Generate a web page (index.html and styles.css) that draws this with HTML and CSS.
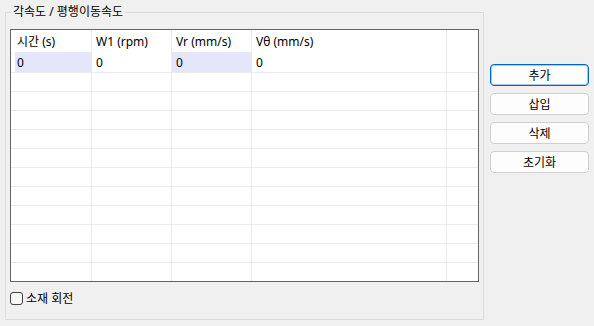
FILE: index.html
```html
<!DOCTYPE html>
<html lang="ko">
<head>
    <meta charset="UTF-8">
    <meta name="viewport" content="width=device-width, initial-scale=1.0">
    <title>각속도 / 평행이동속도</title>
    <link rel="stylesheet" href="styles.css">
</head>
<body>
    <div class="window">
        <fieldset class="group">
            <legend class="group-title">각속도 / 평행이동속도</legend>

            <div class="grid">
                <div class="row head">
                    <div class="cell c1">시간 (s)</div>
                    <div class="cell c2">W1 (rpm)</div>
                    <div class="cell c3">Vr (mm/s)</div>
                    <div class="cell c4">Vθ (mm/s)</div>
                    <div class="cell fill"></div>
                </div>
                <div class="row first">
                    <div class="cell c1 sel">0</div>
                    <div class="cell c2">0</div>
                    <div class="cell c3 sel">0</div>
                    <div class="cell c4">0</div>
                    <div class="cell fill"></div>
                </div>
                <div class="row"><div class="cell c1"></div><div class="cell c2"></div><div class="cell c3"></div><div class="cell c4"></div><div class="cell fill"></div></div>
                <div class="row"><div class="cell c1"></div><div class="cell c2"></div><div class="cell c3"></div><div class="cell c4"></div><div class="cell fill"></div></div>
                <div class="row"><div class="cell c1"></div><div class="cell c2"></div><div class="cell c3"></div><div class="cell c4"></div><div class="cell fill"></div></div>
                <div class="row"><div class="cell c1"></div><div class="cell c2"></div><div class="cell c3"></div><div class="cell c4"></div><div class="cell fill"></div></div>
                <div class="row"><div class="cell c1"></div><div class="cell c2"></div><div class="cell c3"></div><div class="cell c4"></div><div class="cell fill"></div></div>
                <div class="row"><div class="cell c1"></div><div class="cell c2"></div><div class="cell c3"></div><div class="cell c4"></div><div class="cell fill"></div></div>
                <div class="row"><div class="cell c1"></div><div class="cell c2"></div><div class="cell c3"></div><div class="cell c4"></div><div class="cell fill"></div></div>
                <div class="row"><div class="cell c1"></div><div class="cell c2"></div><div class="cell c3"></div><div class="cell c4"></div><div class="cell fill"></div></div>
                <div class="row"><div class="cell c1"></div><div class="cell c2"></div><div class="cell c3"></div><div class="cell c4"></div><div class="cell fill"></div></div>
                <div class="row"><div class="cell c1"></div><div class="cell c2"></div><div class="cell c3"></div><div class="cell c4"></div><div class="cell fill"></div></div>
                <div class="row last"><div class="cell c1"></div><div class="cell c2"></div><div class="cell c3"></div><div class="cell c4"></div><div class="cell fill"></div></div>
            </div>

            <label class="check">
                <span class="box"></span>
                <span class="check-text">소재 회전</span>
            </label>
        </fieldset>

        <div class="actions">
            <button class="btn default">추가</button>
            <button class="btn">삽입</button>
            <button class="btn">삭제</button>
            <button class="btn">초기화</button>
        </div>
    </div>
</body>
</html>
```

FILE: styles.css
```css
* {
    margin: 0;
    padding: 0;
    box-sizing: border-box;
}

body {
    font-family: "Noto Sans", "Noto Sans CJK KR", sans-serif;
    font-size: 12px;
    color: #000;
    background-color: #f0f0f0;
    width: 594px;
    height: 326px;
    overflow: hidden;
}

.window {
    display: flex;
    align-items: flex-start;
    padding: 4px 0 0 5px;
}

/* group box */
.group {
    width: 479px;
    border: 1px solid #dcdcdc;
    padding: 0 4px 13px 4px;
}

.group-title {
    margin-left: 1px;
    padding: 0 2px;
    height: 16px;
    line-height: 16px;
}

/* data grid */
.grid {
    margin-top: 9px;
    height: 253px;
    border: 1px solid #646464;
    background-color: #fff;
    display: flex;
    flex-direction: column;
}

.row {
    display: flex;
    height: 19px;
    padding-left: 4px;
    border-bottom: 1px solid #ebebeb;
}

.row.head {
    height: 22px;
    border-bottom: none;
}

.row.first {
    height: 21px;
}

.row.last {
    height: 18px;
    border-bottom: none;
}

.cell {
    border-right: 1px solid #ebebeb;
    padding-left: 4px;
    display: flex;
    align-items: center;
    white-space: nowrap;
}

.row.first .cell {
    padding-top: 1px;
}

.c1 {
    width: 77px;
    padding-left: 2px;
}

.c2,
.c3 {
    width: 80px;
}

.c4 {
    width: 195px;
}

.fill {
    flex: 1;
    border-right: none;
}

.sel {
    background-color: #e6e6fa;
}

/* checkbox */
.check {
    display: flex;
    align-items: center;
    height: 16px;
    margin-top: 8px;
}

.box {
    width: 13px;
    height: 13px;
    border: 1px solid #444;
    border-radius: 3px;
    background-color: #f7f7f7;
}

.check-text {
    margin-left: 3px;
}

/* buttons */
.actions {
    display: flex;
    flex-direction: column;
    gap: 7px;
    margin: 60px 0 0 6px;
}

.btn {
    width: 99px;
    height: 22px;
    font-family: inherit;
    font-size: 12px;
    background-color: #fdfdfd;
    border: 1px solid #d0d0d0;
    border-radius: 4px;
    color: #000;
}

.btn.default {
    border-color: #0067c0;
    box-shadow: inset 0 0 0 1px rgba(0, 103, 192, 0.35);
}
```
